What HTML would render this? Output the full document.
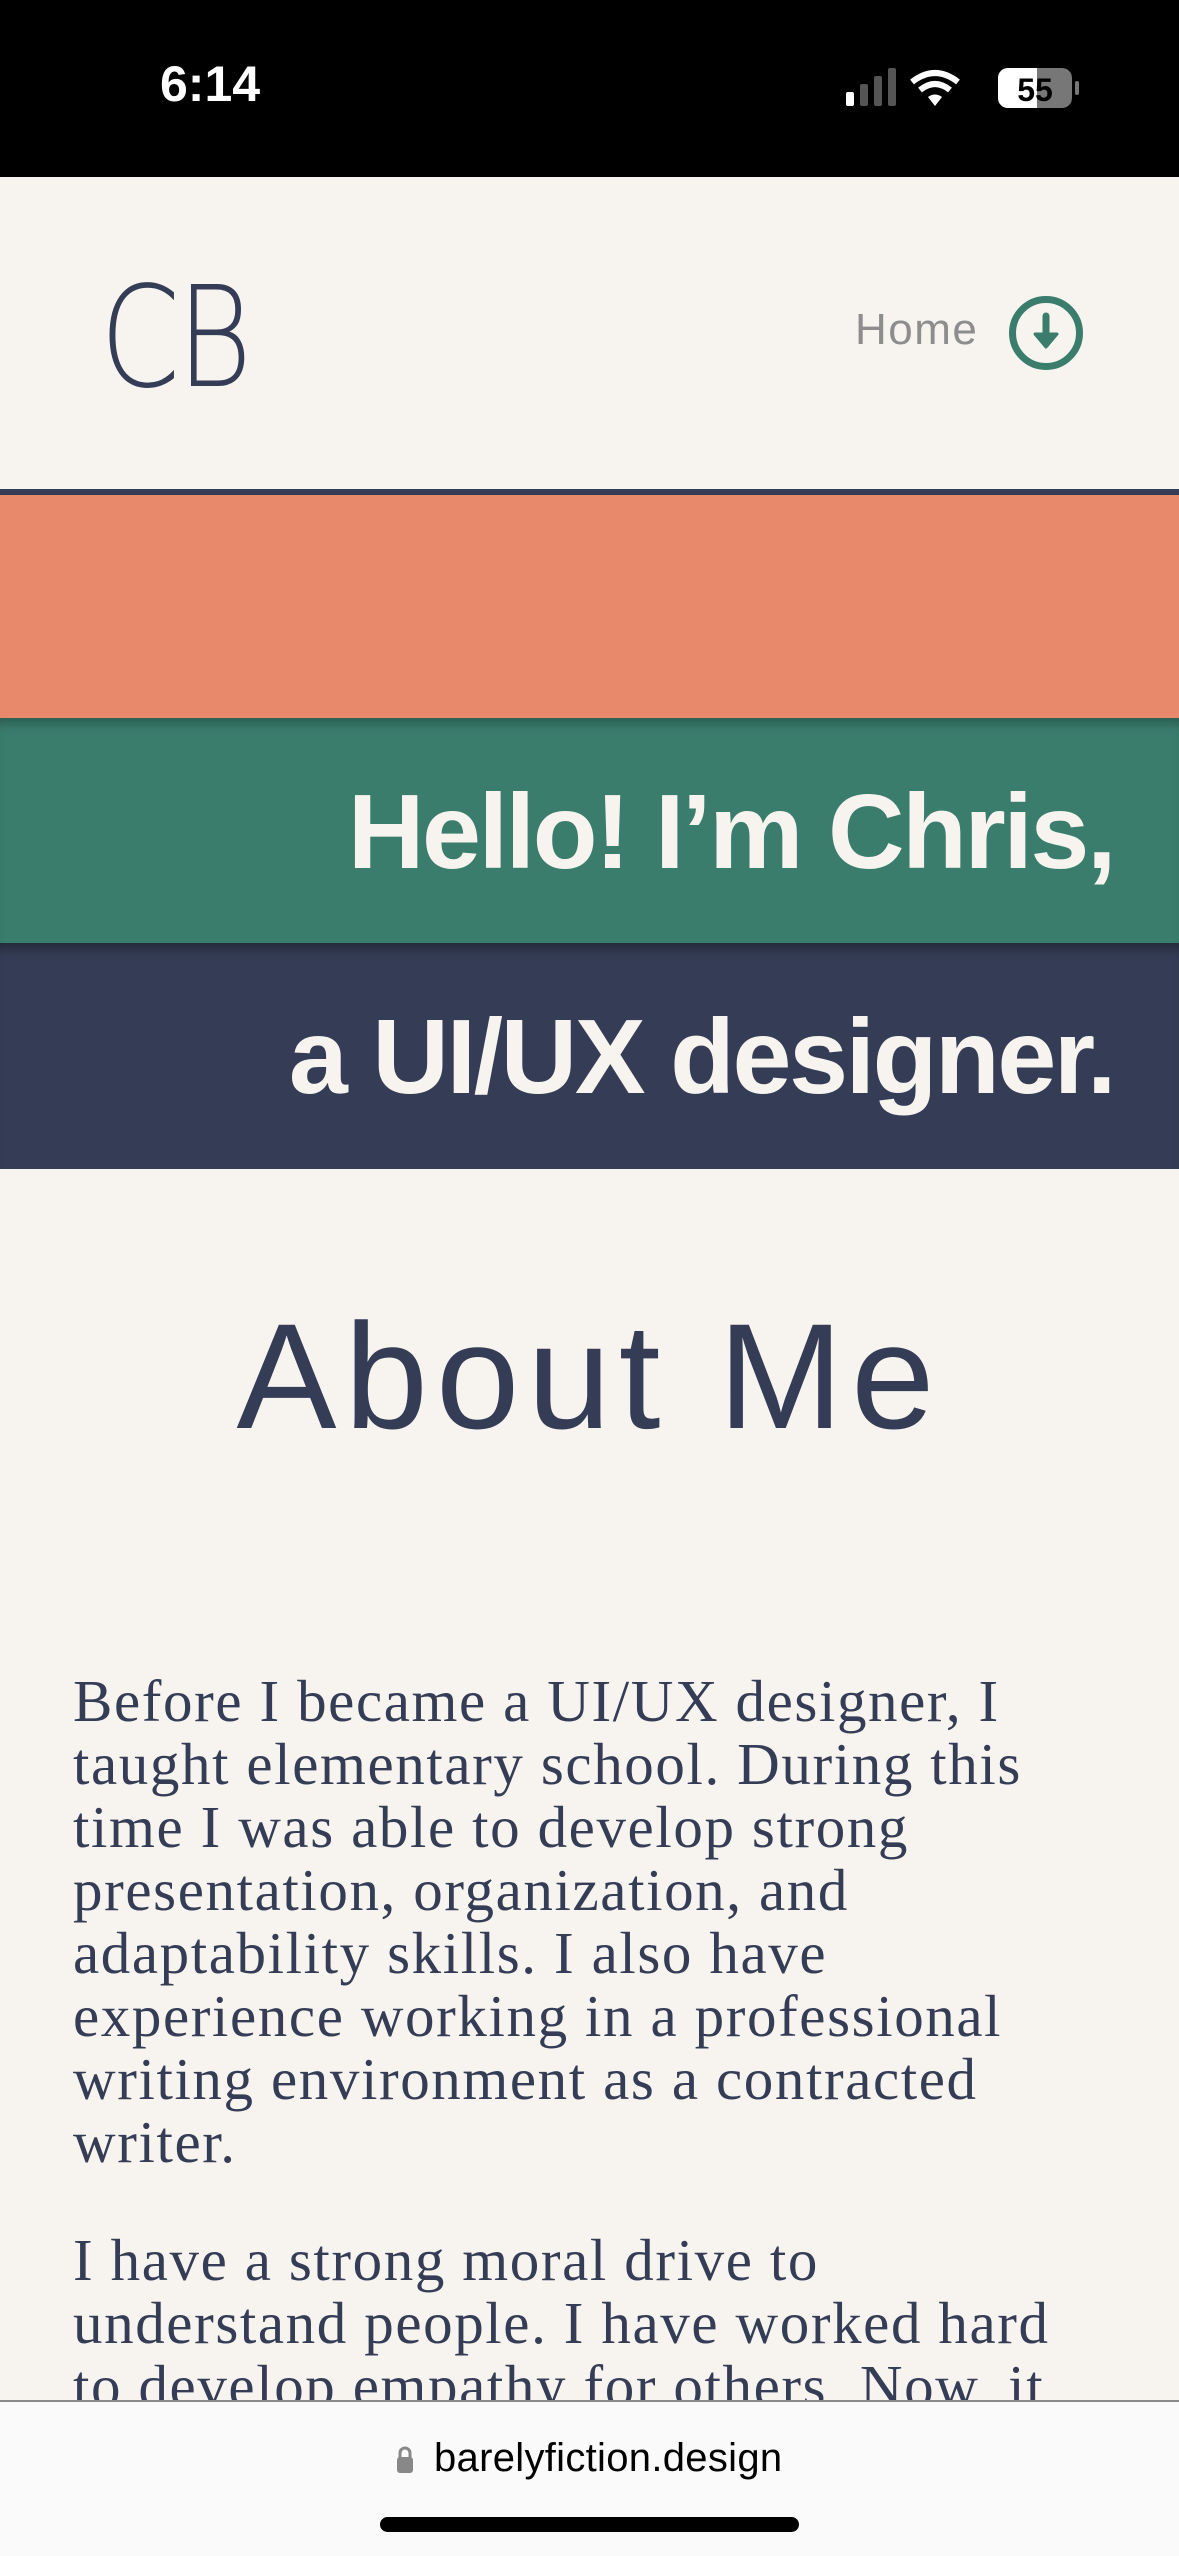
<!DOCTYPE html>
<html><head><meta charset="utf-8"><style>
*{margin:0;padding:0;box-sizing:border-box}
body{width:1179px;height:2556px;overflow:hidden;background:#f7f4f0;position:relative;font-family:"Liberation Sans",sans-serif}
.abs{position:absolute}
.status{left:0;top:0;width:1179px;height:177px;background:#000}
.time{left:160px;top:55px;color:#fff;font-weight:bold;font-size:50px}
.hdr{left:0;top:177px;width:1179px;height:312px;background:#f7f4f0}
.cb{left:100px;top:257px;font-size:140px;color:#343d55;letter-spacing:-4px;font-family:"DejaVu Sans",sans-serif;font-weight:200;transform:scaleX(0.82);transform-origin:left top}
.home{left:855px;top:305px;font-size:44px;color:#8d8d8d;letter-spacing:1.5px}
.circle{left:1009px;top:296px;width:74px;height:74px;border:7px solid #3a7d6d;border-radius:50%}
.line{left:0;top:489px;width:1179px;height:6px;background:#343d55}
.band{left:0;width:1179px}
.t{right:65px;color:#f7f4f0;font-weight:bold;font-size:106px;letter-spacing:-2.4px;white-space:nowrap}
.about{left:0;width:1179px;text-align:center;top:1290px;font-size:150px;color:#343d55;letter-spacing:8px}
.p{left:73px;color:#343d55;font-family:"Liberation Serif",serif;font-size:59px;line-height:63px;white-space:nowrap;letter-spacing:1.6px}
.bottom{left:0;top:2400px;width:1179px;height:156px;background:#fafafa;border-top:2px solid #8a8a8a}
</style></head><body>
<div class="abs status"></div>
<div class="abs time">6:14</div>
<svg class="abs" style="left:840px;top:66px" width="245" height="44" viewBox="0 0 245 44">
<rect x="6" y="26" width="8" height="14" rx="2" fill="#fff"/>
<rect x="20" y="18" width="8" height="22" rx="2" fill="#555"/>
<rect x="34" y="10" width="8" height="30" rx="2" fill="#555"/>
<rect x="48" y="2" width="8" height="38" rx="2" fill="#555"/>
<path d="M72 16 Q95 -2 118 16" stroke="#fff" stroke-width="6" fill="none"/>
<path d="M80 24 Q95 12 110 24" stroke="#fff" stroke-width="6" fill="none"/>
<path d="M88 31 L95 40 L102 31 Q95 26 88 31Z" fill="#fff"/>
<rect x="158" y="2" width="74" height="40" rx="10" fill="#777"/>
<path d="M168 2 H197 V42 H168 A10 10 0 0 1 158 32 V12 A10 10 0 0 1 168 2Z" fill="#fff"/>
<text x="195" y="35" font-family="Liberation Sans" font-weight="bold" font-size="32" fill="#000" text-anchor="middle">55</text>
<rect x="235" y="15" width="4" height="14" rx="2" fill="#777"/>
</svg>
<div class="abs hdr"></div>
<div class="abs cb">CB</div>
<div class="abs home">Home</div>
<div class="abs circle"></div>
<svg class="abs" style="left:1009px;top:296px" width="74" height="74" viewBox="0 0 74 74">
<path d="M37 20 V48" stroke="#3a7d6d" stroke-width="7" stroke-linecap="round"/>
<path d="M26 38 L37 51 L48 38Z" fill="#3a7d6d" stroke="#3a7d6d" stroke-width="3" stroke-linejoin="round"/>
</svg>
<div class="abs line"></div>
<div class="abs band" style="top:495px;height:223px;background:#e9896c"></div>
<div class="abs band" style="top:718px;height:225px;background:#3a7d6d;box-shadow:inset 0 12px 10px -6px rgba(0,0,0,0.25)"></div>
<div class="abs band" style="top:943px;height:226px;background:#343d55;box-shadow:inset 0 12px 10px -6px rgba(0,0,0,0.3)"></div>
<div class="abs t" style="top:772px">Hello! I’m Chris,</div>
<div class="abs t" style="top:997px">a UI/UX designer.</div>
<div class="abs about">About Me</div>
<div class="abs p" style="top:1670px">Before I became a UI/UX designer, I<br>taught elementary school. During this<br>time I was able to develop strong<br>presentation, organization, and<br>adaptability skills. I also have<br>experience working in a professional<br>writing environment as a contracted<br>writer.</div>
<div class="abs p" style="top:2229px">I have a strong moral drive to<br>understand people. I have worked hard<br>to develop empathy for others. Now, it</div>
<div class="abs bottom"></div>
<svg class="abs" style="left:396px;top:2446px" width="18" height="28" viewBox="0 0 18 28"><path d="M4 12 V7 A5 5 0 0 1 14 7 V12" stroke="#888" stroke-width="3" fill="none"/><rect x="1" y="11" width="16" height="16" rx="3" fill="#888"/></svg>
<div class="abs" style="left:434px;top:2436px;font-size:40px;color:#000;letter-spacing:0.3px">barelyfiction.design</div>
<div class="abs" style="left:380px;top:2517px;width:419px;height:15px;border-radius:8px;background:#000"></div>
</body></html>
